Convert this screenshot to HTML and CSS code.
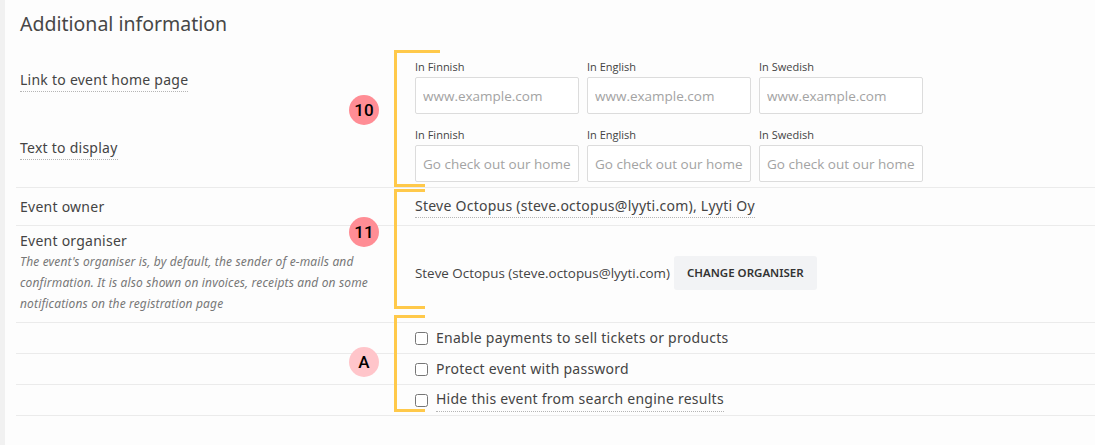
FILE: index.html
```html
<!DOCTYPE html>
<html>
<head>
<meta charset="utf-8">
<title>Additional information</title>
<link rel="stylesheet" href="styles.css">
</head>
<body>
	<div class="page">
		<h2 class="section-title">Additional information</h2>

		<div class="form-row row-links">
			<div class="row-label"><span class="dotted">Link to event home page</span></div>
			<div class="lang-group">
				<div class="lang-field">
					<label class="lang-label">In Finnish</label>
					<input class="text-input" type="text" placeholder="www.example.com">
				</div>
				<div class="lang-field">
					<label class="lang-label">In English</label>
					<input class="text-input" type="text" placeholder="www.example.com">
				</div>
				<div class="lang-field">
					<label class="lang-label">In Swedish</label>
					<input class="text-input" type="text" placeholder="www.example.com">
				</div>
			</div>
			<div class="row-label"><span class="dotted">Text to display</span></div>
			<div class="lang-group">
				<div class="lang-field">
					<label class="lang-label">In Finnish</label>
					<input class="text-input" type="text" placeholder="Go check out our homepage">
				</div>
				<div class="lang-field">
					<label class="lang-label">In English</label>
					<input class="text-input" type="text" placeholder="Go check out our homepage">
				</div>
				<div class="lang-field">
					<label class="lang-label">In Swedish</label>
					<input class="text-input" type="text" placeholder="Go check out our homepage">
				</div>
			</div>
		</div>

		<div class="form-row row-owner">
			<div class="row-label">Event owner</div>
			<div class="row-value"><span class="dotted">Steve Octopus (steve.octopus@lyyti.com), Lyyti Oy</span></div>
		</div>

		<div class="form-row row-organiser">
			<div class="row-label">
				Event organiser
				<p class="row-help">The event's organiser is, by default, the sender of e-mails and confirmation. It is also shown on invoices, receipts and on some notifications on the registration page</p>
			</div>
			<div class="row-value">
				<span class="organiser-name">Steve Octopus (steve.octopus@lyyti.com)</span>
				<button class="btn-grey">Change organiser</button>
			</div>
		</div>

		<div class="form-row row-check">
			<div class="row-label"></div>
			<label class="check"><input type="checkbox"><span>Enable payments to sell tickets or products</span></label>
		</div>
		<div class="form-row row-check">
			<div class="row-label"></div>
			<label class="check"><input type="checkbox"><span>Protect event with password</span></label>
		</div>
		<div class="form-row row-check">
			<div class="row-label"></div>
			<label class="check"><input type="checkbox"><span class="dotted">Hide this event from search engine results</span></label>
		</div>

		<!-- annotations -->
		<div class="bracket bracket-10"></div>
		<div class="bracket bracket-11"></div>
		<div class="bracket bracket-a"></div>
		<span class="badge badge-10">10</span>
		<span class="badge badge-11">11</span>
		<span class="badge badge-a">A</span>
	</div>
</body>
</html>
```

FILE: styles.css
```css
html, body{
	margin:0;
	padding:0;
}
body{
	background:#fdfdfd;
	font-family:"Noto Sans", "Open Sans", sans-serif;
	color:#444444;
	font-size:14px;
	letter-spacing:0.25px;
}
.page{
	position:relative;
	min-height:445px;
	border-left:5px solid #f1f1f1;
	padding-left:11px;
	box-sizing:border-box;
}
.section-title{
	margin:0;
	padding:12px 0 0 4px;
	font-size:19.5px;
	line-height:24px;
	font-weight:400;
	letter-spacing:0;
	color:#474747;
}
.form-row{
	display:grid;
	grid-template-columns:399px 1fr;
	border-bottom:1px solid #ebebeb;
}
.row-label{
	padding-left:4px;
	line-height:20px;
}
.dotted{
	border-bottom:1px dotted #b5b5b5;
	padding-bottom:2px;
}

/* links */
.row-links{
	padding-top:23px;
	padding-bottom:5px;
	row-gap:13px;
}
.row-links .row-label{
	padding-top:11px;
}
.lang-group{
	display:flex;
	gap:8px;
}
.lang-field{
	width:164px;
}
.lang-label{
	display:block;
	font-family:"Open Sans", sans-serif;
	font-size:11px;
	line-height:16px;
	letter-spacing:0;
	color:#444444;
	margin-bottom:2px;
}
.text-input{
	display:block;
	width:164px;
	height:37px;
	box-sizing:border-box;
	border:1px solid #dcdcdc;
	border-radius:2px;
	background:#ffffff;
	padding:0 7px;
	font-family:"Open Sans", sans-serif;
	font-size:13.5px;
	letter-spacing:0;
	color:#444;
}
.text-input::placeholder{
	color:#a3a3a3;
}

/* owner / organiser */
.row-owner{
	height:37px;
	align-items:center;
}
.row-value{
	display:flex;
	align-items:center;
}
.row-organiser{
	padding-top:5px;
	padding-bottom:8px;
	align-items:center;
}
.row-organiser .row-label{
	align-self:start;
}
.row-help{
	margin:0;
	width:380px;
	font-size:12px;
	line-height:21px;
	font-style:italic;
	letter-spacing:0.15px;
	color:#777777;
}
.organiser-name{
	font-family:"Open Sans", sans-serif;
	font-size:13.4px;
	letter-spacing:0;
}
.btn-grey{
	margin-left:4px;
	height:34px;
	padding:0 13px;
	border:none;
	border-radius:3px;
	background:#f2f3f5;
	font-family:"Noto Sans", sans-serif;
	font-size:11.5px;
	font-weight:600;
	letter-spacing:0;
	text-transform:uppercase;
	color:#333333;
	cursor:pointer;
}

/* checkboxes */
.row-check{
	height:30px;
	align-items:center;
}
.check{
	display:flex;
	align-items:center;
	gap:8px;
	line-height:20px;
}
.check input{
	margin:0;
	width:13px;
	height:13px;
}

/* annotation overlay */
.bracket{
	position:absolute;
	left:389px;
	width:3px;
	background:#ffc94a;
}
.bracket:before,
.bracket:after{
	content:"";
	position:absolute;
	left:0;
	height:3px;
	width:31px;
	background:#ffc94a;
}
.bracket:before{ top:0; }
.bracket:after{ bottom:0; }
.bracket-10{ top:50px; height:137px; }
.bracket-10:before{ width:46px; }
.bracket-11{ top:189px; height:120px; }
.bracket-a{ top:315px; height:97px; }

.badge{
	position:absolute;
	left:344px;
	width:30px;
	height:30px;
	border-radius:50%;
	background:#ff8d95;
	color:#000;
	font-family:Roboto, sans-serif;
	font-weight:500;
	font-size:17px;
	letter-spacing:0;
	line-height:30px;
	text-align:center;
}
.badge-10{ top:95px; }
.badge-11{ top:217px; }
.badge-a{ top:347px; background:#ffc5ca; }
```
